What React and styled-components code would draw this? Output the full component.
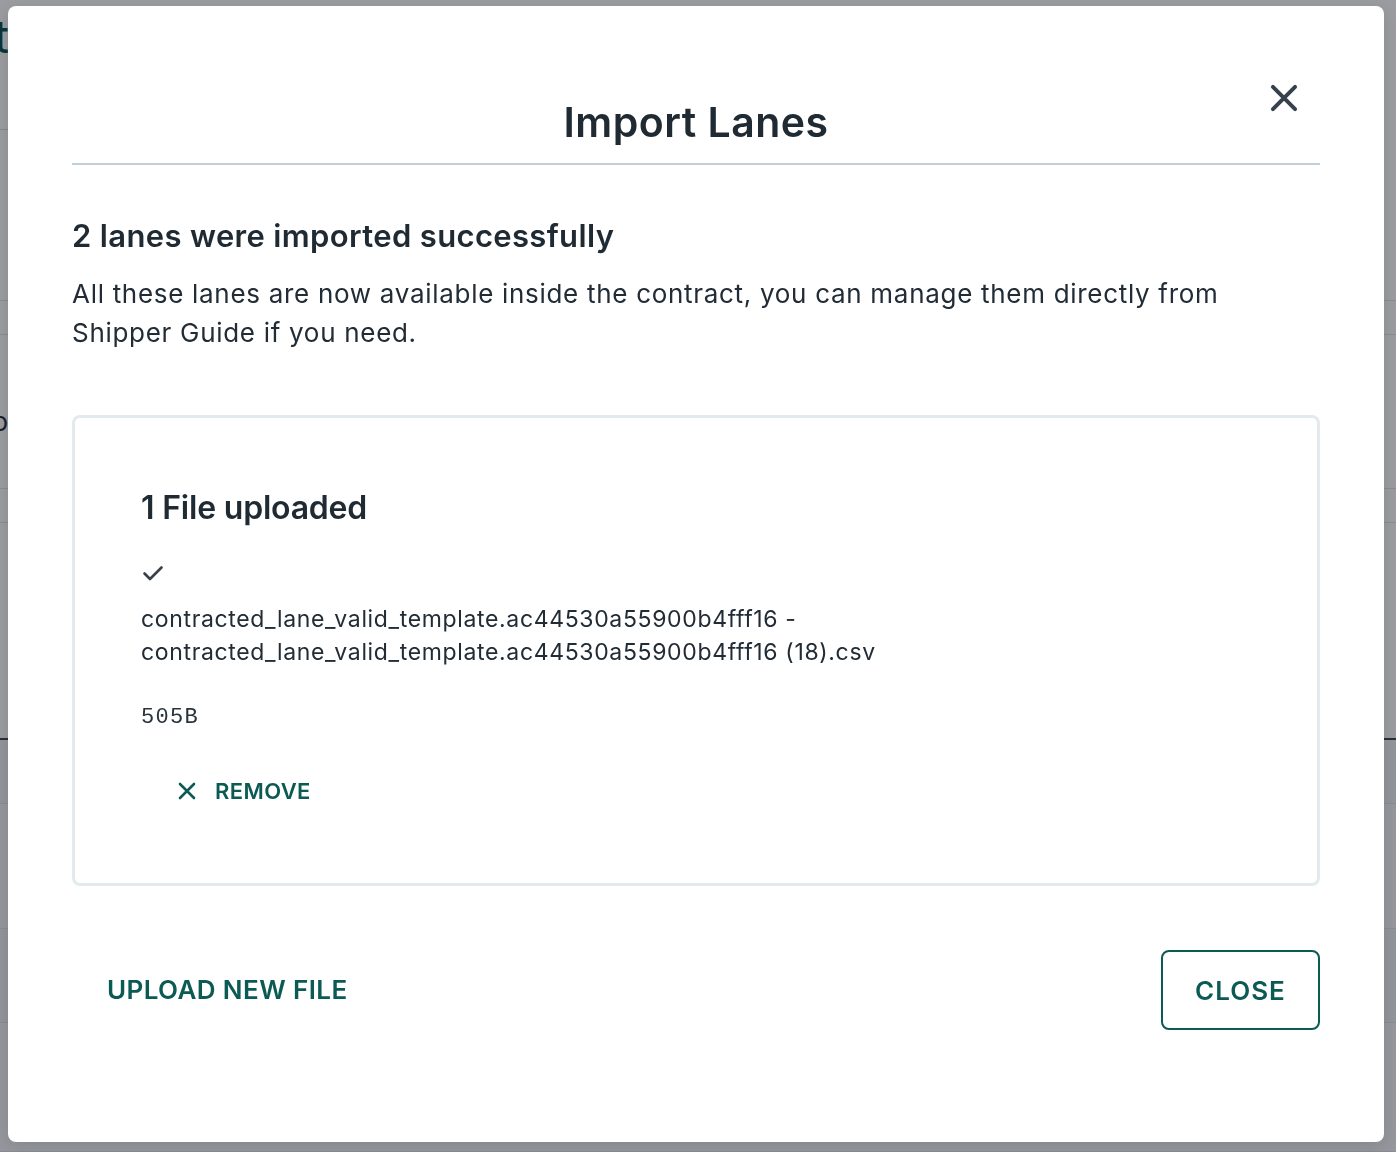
import React from 'react'
import styled, { createGlobalStyle } from 'styled-components'

const Global = createGlobalStyle`
  * { box-sizing: border-box; }
  html, body { margin: 0; padding: 0; }
  body {
    font-family: Inter, "Noto Sans", "Liberation Sans", sans-serif;
    background: #ffffff;
    color: #1f2a33;
  }
`

const teal = '#0b5a53'

// page sitting under the dialog
const Page = styled.div`
  width: 1396px;
  height: 1152px;
  overflow: hidden;
  display: flex;
  flex-direction: column;
`
const PageTop = styled.div`
  height: 131px;
  border-bottom: 1px solid #d4dde3;
  display: flex;
  justify-content: flex-end;
  width: 9px;
  white-space: nowrap;
  font-size: 46px;
  color: #0b4f49;
  padding-top: 8px;
`
const PageRow = styled.div`
  height: ${p => p.h}px;
  border-bottom: ${p => (p.dark ? '2px solid #3d4650' : '1px solid #dfe5ea')};
  background: ${p => p.bg || '#ffffff'};
  display: flex;
  align-items: center;
  padding-top: ${p => p.pt || 0}px;
  font-size: 26px;
  color: #1f2a33;
`
const Clip = styled.div`
  width: 8px;
  display: flex;
  justify-content: flex-end;
  white-space: nowrap;
`

const Backdrop = styled.div`
  position: fixed;
  inset: 0;
  background: rgba(15, 19, 29, 0.42);
`

const Modal = styled.div`
  position: fixed;
  left: 8px;
  top: 6px;
  width: 1376px;
  height: 1136px;
  background: #ffffff;
  border-radius: 8px;
  box-shadow: 0 4px 16px rgba(0, 0, 0, 0.12);
  padding: 0 64px;
  display: flex;
  flex-direction: column;
`

const Header = styled.div`
  position: relative;
  padding: 92px 0 17px;
  border-bottom: 2px solid #c3cfd8;
`
const Title = styled.h1`
  margin: 0;
  text-align: center;
  font-size: 41px;
  line-height: 48px;
  font-weight: 600;
  letter-spacing: 0.5px;
  color: #1f2a33;
`
const CloseIcon = styled.button`
  position: absolute;
  right: 17px;
  top: 73px;
  width: 38px;
  height: 38px;
  border: 0;
  padding: 0;
  background: none;
  display: flex;
  align-items: center;
  justify-content: center;
  color: #36414c;
  cursor: pointer;
`

const Heading = styled.h2`
  margin: 51px 0 0;
  font-size: 31px;
  line-height: 40px;
  font-weight: 600;
  letter-spacing: 0.35px;
  color: #1f2a33;
`
const Text = styled.p`
  margin: 18px 0 0;
  font-size: 26px;
  line-height: 39px;
  font-weight: 400;
  letter-spacing: 0.7px;
  color: #222c36;
`

const Card = styled.div`
  margin-top: 63px;
  border: 3px solid #e3eaee;
  border-radius: 8px;
  padding: 70px 66px 78px;
  display: flex;
  flex-direction: column;
  align-items: flex-start;
`
const CardTitle = styled.h3`
  margin: 0;
  font-size: 32px;
  line-height: 40px;
  font-weight: 600;
  letter-spacing: -0.2px;
  color: #1f2a33;
`
const Check = styled.div`
  margin-top: 33px;
  width: 24px;
  height: 24px;
  color: #36414c;
`
const FileName = styled.div`
  margin-top: 18px;
  font-size: 23px;
  line-height: 33px;
  letter-spacing: 0.65px;
  color: #222c36;
`
const Size = styled.div`
  margin-top: 37px;
  font-family: "Liberation Mono", "DejaVu Sans Mono", monospace;
  font-size: 22px;
  line-height: 24px;
  letter-spacing: 1.3px;
  color: #2a333c;
`
const TextButton = styled.button`
  border: 0;
  background: none;
  padding: 0;
  display: flex;
  align-items: center;
  gap: ${p => p.gap || 0}px;
  font-family: inherit;
  font-weight: 600;
  font-size: ${p => p.size}px;
  line-height: 28px;
  letter-spacing: ${p => p.ls || 0}px;
  color: ${teal};
  cursor: pointer;
`
const RemoveButton = styled(TextButton)`
  margin: 47px 0 0 34px;
`

const Footer = styled.div`
  margin-top: 64px;
  display: flex;
  align-items: center;
  justify-content: space-between;
`
const UploadButton = styled(TextButton)`
  padding-left: 35px;
`
const OutlineButton = styled.button`
  width: 159px;
  height: 80px;
  border: 2px solid ${teal};
  border-radius: 8px;
  background: #ffffff;
  font-family: inherit;
  font-weight: 600;
  font-size: 26px;
  letter-spacing: 1px;
  color: ${teal};
  cursor: pointer;
`

const XIcon = ({ size, stroke }) => (
  <svg width={size} height={size} viewBox="0 0 24 24" fill="none">
    <path d="M5 5 L19 19 M19 5 L5 19" stroke="currentColor" strokeWidth={stroke} strokeLinecap="round" />
  </svg>
)

export default function App() {
  return (
    <>
      <Global />
      <Page>
        <PageTop>Contract</PageTop>
        <PageRow h={172} />
        <PageRow h={34} />
        <PageRow h={155} pt={20}><Clip>Go</Clip></PageRow>
        <PageRow h={35} />
        <PageRow h={218} dark />
        <PageRow h={65} bg="#f1f3f5" />
        <PageRow h={125} bg="#f6f7f9" />
        <PageRow h={95} bg="#f1f3f5" />
        <PageRow h={130} bg="#f6f7f9" />
      </Page>
      <Backdrop />
      <Modal>
        <Header>
          <Title>Import Lanes</Title>
          <CloseIcon aria-label="close">
            <XIcon size={38} stroke={2.5} />
          </CloseIcon>
        </Header>

        <Heading>2 lanes were imported successfully</Heading>
        <Text>
          All these lanes are now available inside the contract, you can manage them directly from
          <br />
          Shipper Guide if you need.
        </Text>

        <Card>
          <CardTitle>1 File uploaded</CardTitle>
          <Check>
            <svg width="24" height="24" viewBox="0 0 24 24" fill="none">
              <path d="M3.5 12.5 L9 18 L20.5 6.5" stroke="currentColor" strokeWidth="2.6" strokeLinecap="round" strokeLinejoin="round" />
            </svg>
          </Check>
          <FileName>
            contracted_lane_valid_template.ac44530a55900b4fff16 -
            <br />
            contracted_lane_valid_template.ac44530a55900b4fff16 (18).csv
          </FileName>
          <Size>505B</Size>
          <RemoveButton size={22} gap={16} ls={0.4}>
            <XIcon size={24} stroke={2.6} />
            REMOVE
          </RemoveButton>
        </Card>

        <Footer>
          <UploadButton size={26} ls={0.4}>UPLOAD NEW FILE</UploadButton>
          <OutlineButton>CLOSE</OutlineButton>
        </Footer>
      </Modal>
    </>
  )
}
